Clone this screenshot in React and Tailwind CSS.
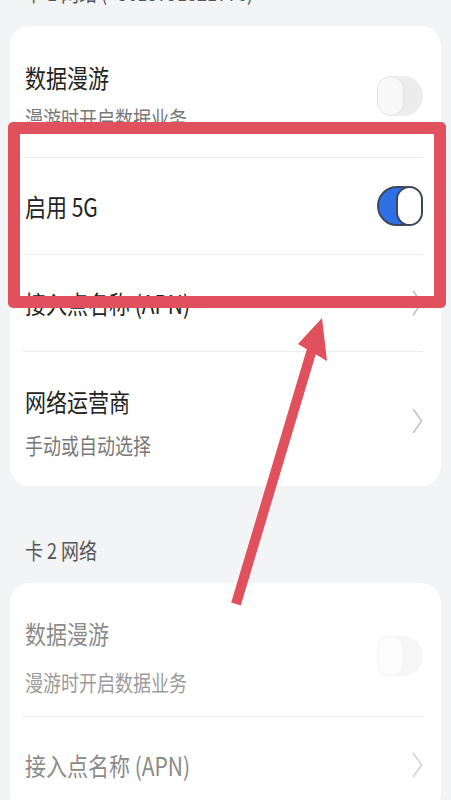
const FONT = { fontFamily: '"Noto Sans CJK SC", "Noto Sans", sans-serif' };

function Toggle({ on, faint }) {
    if (on) {
        return (
            <div className="relative h-[40px] w-[46px] shrink-0 rounded-full border-2 border-[#3f4756] bg-[#2f6fe6]">
                <div className="absolute right-[-2px] top-[-2px] h-[40px] w-[27px] rounded-full border-2 border-[#3f4756] bg-white" />
            </div>
        );
    }
    return (
        <div
            className={`relative h-[40px] w-[46px] shrink-0 rounded-full ${
                faint ? "bg-[#f6f6f6]" : "bg-[#ececec]"
            }`}
        >
            <div
                className={`absolute left-0 top-0 h-[40px] w-[27px] rounded-full border ${
                    faint ? "border-[#f1f1f1] bg-[#fdfdfd]" : "border-[#e2e2e2] bg-[#f8f8f8]"
                }`}
            />
        </div>
    );
}

function Chevron({ light }) {
    return (
        <svg width="11" height="26" viewBox="0 0 11 26" className="shrink-0">
            <path
                d="M1.5 1.5 L9.5 13 L1.5 24.5"
                fill="none"
                stroke={light ? "#d4d4d4" : "#c4c4c4"}
                strokeWidth="1.6"
                strokeLinecap="round"
                strokeLinejoin="round"
            />
        </svg>
    );
}

function Divider() {
    return <div className="h-px bg-[#ededed]" />;
}

export default function App() {
    return (
        <div className="relative h-[800px] overflow-hidden bg-[#f3f4f6]" style={FONT}>
            <div className="flex flex-col px-[10px]">
                {/* card 1 header, mostly scrolled off */}
                <div className="-mt-[18px] mb-[20px] origin-bottom scale-y-[1.2] pl-[15px] text-[18px] leading-[24px] text-[#555]">
                    卡 1 网络 (+8618751321776)
                </div>

                <div className="rounded-[20px] bg-white pl-[13px] pr-[18px]">
                    <div className="flex items-center justify-between pt-[36px] pb-[28px] pl-[2px]">
                        <div>
                            <div className="scale-y-[1.2] text-[21px] leading-[30px] text-[#222]">数据漫游</div>
                            <div className="mt-[13px] scale-y-[1.2] text-[18px] leading-[24px] text-[#777]">漫游时开启数据业务</div>
                        </div>
                        <Toggle />
                    </div>
                    <Divider />
                    <div className="flex h-[96px] items-center justify-between pl-[2px]">
                        <div className="scale-y-[1.2] text-[21px] leading-[30px] text-[#222]">启用 5G</div>
                        <Toggle on />
                    </div>
                    <Divider />
                    <div className="flex h-[96px] items-center justify-between pl-[2px]">
                        <div className="scale-y-[1.2] text-[21px] leading-[30px] text-[#222]">接入点名称 (APN)</div>
                        <Chevron />
                    </div>
                    <Divider />
                    <div className="flex items-center justify-between pt-[34px] pb-[30px] pl-[2px]">
                        <div>
                            <div className="scale-y-[1.2] text-[21px] leading-[30px] text-[#222]">网络运营商</div>
                            <div className="mt-[16px] scale-y-[1.2] text-[18px] leading-[24px] text-[#777]">手动或自动选择</div>
                        </div>
                        <Chevron />
                    </div>
                </div>

                <div className="mt-[51px] mb-[22px] scale-y-[1.2] pl-[15px] text-[18px] leading-[24px] text-[#555]">卡 2 网络</div>

                <div className="rounded-[20px] bg-white pl-[13px] pr-[18px]">
                    <div className="flex items-center justify-between pt-[35px] pb-[23px] pl-[2px]">
                        <div>
                            <div className="scale-y-[1.2] text-[21px] leading-[30px] text-[#8a8a8a]">数据漫游</div>
                            <div className="mt-[21px] scale-y-[1.2] text-[18px] leading-[24px] text-[#9a9a9a]">漫游时开启数据业务</div>
                        </div>
                        <Toggle faint />
                    </div>
                    <Divider />
                    <div className="flex h-[96px] items-center justify-between pl-[2px]">
                        <div className="scale-y-[1.2] text-[21px] leading-[30px] text-[#8a8a8a]">接入点名称 (APN)</div>
                        <Chevron light />
                    </div>
                </div>
            </div>

            {/* annotation: highlight box */}
            <div className="absolute left-[8px] top-[122px] h-[186px] w-[438px] rounded-[5px] border-[12px] border-[#e0505d]" />

            {/* annotation: arrow */}
            <svg className="absolute left-0 top-0" width="451" height="800" viewBox="0 0 451 800">
                <line x1="236" y1="604" x2="313" y2="346" stroke="#e0505d" strokeWidth="10" />
                <polygon points="322,318 298,344 327,361" fill="#e0505d" />
            </svg>
        </div>
    );
}
